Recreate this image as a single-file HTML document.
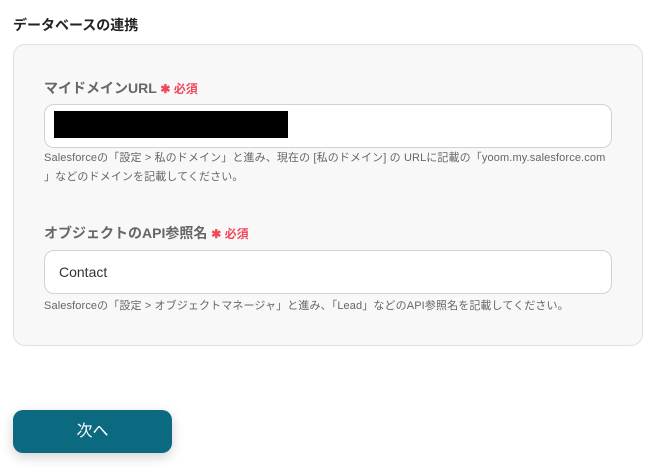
<!DOCTYPE html>
<html><head><meta charset="utf-8"><style>
body{margin:0;width:660px;height:473px;background:#fff;font-family:"Liberation Sans","Noto Sans CJK JP",sans-serif;position:relative;overflow:hidden}
.a{position:absolute}
h1{position:absolute;left:13px;top:15px;margin:0;font-size:14px;font-weight:bold;color:#222}
.card{left:13px;top:44px;width:628px;height:300px;background:#f8f8f9;border:1px solid #e0e0e3;border-radius:12px}
.lbl{font-size:14px;font-weight:bold;color:#666}
.req{color:#f0475a;font-size:12px;font-weight:bold}
.inp{left:44px;width:566px;height:42px;background:#fff;border:1px solid #cfd2d8;border-radius:10px}
.help{left:44px;font-size:11px;color:#666;line-height:19px;width:600px;letter-spacing:0.12px;white-space:nowrap}
.btn{left:13px;top:410px;width:159px;height:43px;background:#0b6a80;border-radius:10px;color:#fff;font-size:16px;text-align:center;line-height:43px;box-shadow:0 4px 12px rgba(0,0,0,.18)}
</style></head><body>
<h1>データベースの連携</h1>
<div class="a card"></div>
<div class="a lbl" style="left:44px;top:78px">マイドメインURL <span class="req">✱ 必須</span></div>
<div class="a inp" style="top:104px"></div>
<div class="a" style="left:54px;top:111px;width:234px;height:27px;background:#000"></div>
<div class="a help" style="top:149px">Salesforceの「設定 &gt; 私のドメイン」と進み、現在の [私のドメイン] の URLに記載の「yoom.my.salesforce.com<br>」などのドメインを記載してください。</div>
<div class="a lbl" style="left:44px;top:223px">オブジェクトのAPI参照名 <span class="req">✱ 必須</span></div>
<div class="a inp" style="top:250px"></div>
<div class="a" style="left:59px;top:264px;font-size:14px;color:#333">Contact</div>
<div class="a help" style="top:297px">Salesforceの「設定 &gt; オブジェクトマネージャ」と進み、「Lead」などのAPI参照名を記載してください。</div>
<div class="a btn">次へ</div>
</body></html>
